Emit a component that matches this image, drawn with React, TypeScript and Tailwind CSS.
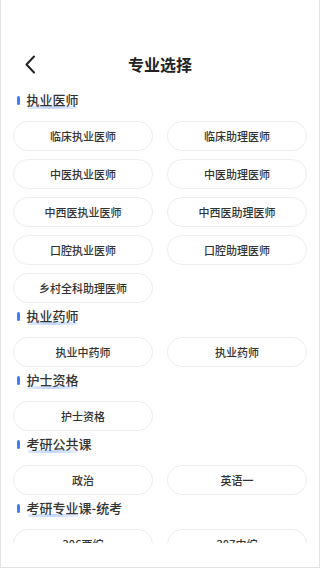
import React from "react";

const sections: { title: string; items: string[] }[] = [
  {
    title: "执业医师",
    items: [
      "临床执业医师",
      "临床助理医师",
      "中医执业医师",
      "中医助理医师",
      "中西医执业医师",
      "中西医助理医师",
      "口腔执业医师",
      "口腔助理医师",
      "乡村全科助理医师",
    ],
  },
  { title: "执业药师", items: ["执业中药师", "执业药师"] },
  { title: "护士资格", items: ["护士资格"] },
  { title: "考研公共课", items: ["政治", "英语一"] },
  { title: "考研专业课-统考", items: ["306西综", "307中综"] },
];

export default function App() {
  return (
    <div
      className="w-[320px] h-[568px] bg-white border-l border-r border-b border-[#e3e3e3] flex flex-col overflow-hidden"
      style={{ fontFamily: '"Noto Sans CJK SC", "Noto Sans", sans-serif' }}
    >
      <div className="h-[44px] shrink-0" />
      <div className="h-[42px] shrink-0 relative flex items-center justify-center">
        <svg
          className="absolute left-[23px] top-[11px]"
          width="12"
          height="19"
          viewBox="0 0 12 19"
          fill="none"
        >
          <polyline
            points="10,1.5 2.5,9.5 10,17.5"
            stroke="#222"
            strokeWidth="2"
            strokeLinecap="round"
            strokeLinejoin="round"
          />
        </svg>
        <span className="text-[16px] font-bold text-[#222] leading-none -mt-[2px]">专业选择</span>
      </div>
      <div className="h-[457px] shrink-0 overflow-hidden px-[12px] pt-[4px]">
        {sections.map((s, i) => (
          <div key={s.title} className={i === 0 ? "" : "mt-[3px]"}>
            <div className="h-[20px] flex items-center relative">
              <div className="w-[2.5px] h-[9px] rounded-full bg-[#3d7bff] ml-[4px]" />
              <div className="relative ml-[7px] h-[14px] flex items-center -mt-[1px]">
                <div className="absolute left-[1px] top-[13px] w-[50px] h-[3px] rounded-full bg-gradient-to-r from-[#dfe9ff] via-[#c2d7ff] to-[#e8f0ff]" />
                <span className="relative text-[13px] font-medium text-[#333] leading-none">{s.title}</span>
              </div>
            </div>
            <div className="grid grid-cols-2 gap-x-[14px] gap-y-[8px] mt-[11px]">
              {s.items.map((it) => (
                <div
                  key={it}
                  className="h-[30px] rounded-full border border-[#ededed] flex items-center justify-center"
                >
                  <span className="text-[11px] font-medium text-[#333] leading-none">{it}</span>
                </div>
              ))}
            </div>
          </div>
        ))}
      </div>
    </div>
  );
}
